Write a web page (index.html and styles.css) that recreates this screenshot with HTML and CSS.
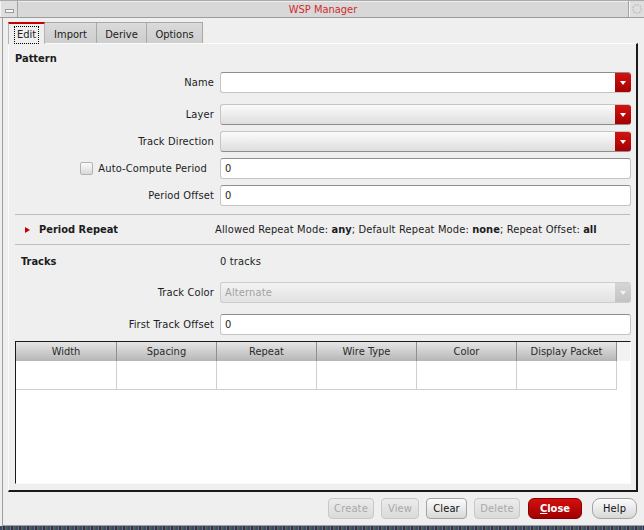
FILE: index.html
```html
<!DOCTYPE html>
<html>
<head>
<meta charset="utf-8">
<link rel="stylesheet" href="styles.css">
</head>
<body>
<div class="titlebar">
  <div class="tb-box tb-left"><span class="min-glyph"></span></div>
  <div class="tb-title">WSP Manager</div>
  <div class="tb-box tb-right">
    <svg width="12" height="12" viewBox="0 0 12 12"><circle cx="6" cy="6" r="4.2" fill="none" stroke="#b8b8b8" stroke-width="1.2" stroke-dasharray="1.6 1.2"/></svg>
  </div>
</div>
<div class="window">
  <div class="tabs">
    <div class="tab active"><span class="focus">Edit</span></div>
    <div class="tab">Import</div>
    <div class="tab">Derive</div>
    <div class="tab">Options</div>
  </div>
  <div class="panel">
    <div class="section-title">Pattern</div>

    <div class="row mt6">
      <div class="label">Name</div>
      <div class="field combo-edit"><span class="val"></span><span class="dd red"><i></i></span></div>
    </div>
    <div class="row mt11">
      <div class="label">Layer</div>
      <div class="field combo"><span class="val"></span><span class="dd red"><i></i></span></div>
    </div>
    <div class="row mt6">
      <div class="label">Track Direction</div>
      <div class="field combo"><span class="val"></span><span class="dd red"><i></i></span></div>
    </div>
    <div class="row mt6">
      <div class="label check-label"><span class="checkbox"></span><span>Auto-Compute Period</span></div>
      <div class="field text"><span class="val">0</span></div>
    </div>
    <div class="row mt6">
      <div class="label">Period Offset</div>
      <div class="field text"><span class="val">0</span></div>
    </div>

    <div class="sep sep-first"></div>
    <div class="repeat-row">
      <div class="repeat-left"><span class="tri"></span><b>Period Repeat</b></div>
      <div class="repeat-right">Allowed Repeat Mode: <b>any</b>; Default Repeat Mode: <b>none</b>; Repeat Offset: <b>all</b></div>
    </div>
    <div class="sep"></div>

    <div class="tracks-row">
      <div class="tracks-title">Tracks</div>
      <div class="tracks-count">0 tracks</div>
    </div>
    <div class="row mt13">
      <div class="label">Track Color</div>
      <div class="field combo disabled"><span class="val">Alternate</span><span class="dd gray"><i></i></span></div>
    </div>
    <div class="row mt11">
      <div class="label">First Track Offset</div>
      <div class="field text"><span class="val">0</span></div>
    </div>

    <div class="table">
      <div class="thead">
        <div class="th">Width</div>
        <div class="th">Spacing</div>
        <div class="th">Repeat</div>
        <div class="th">Wire Type</div>
        <div class="th">Color</div>
        <div class="th">Display Packet</div>
        <div class="th-fill"></div>
      </div>
      <div class="trow">
        <div class="td"></div>
        <div class="td"></div>
        <div class="td"></div>
        <div class="td"></div>
        <div class="td"></div>
        <div class="td"></div>
      </div>
    </div>
  </div>
  <div class="buttons">
    <div class="btn disabled w-create">Create</div>
    <div class="btn disabled w-view">View</div>
    <div class="btn w-clear">Clear</div>
    <div class="btn disabled w-delete">Delete</div>
    <div class="btn primary w-close"><u>C</u>lose</div>
    <div class="btn help w-help">Help</div>
  </div>
</div>
<div class="desktop"></div>
</body>
</html>
```
FILE: styles.css
```css
html, body {
  margin: 0;
  padding: 0;
}
body {
  width: 644px;
  height: 530px;
  overflow: hidden;
  background: #efefef;
  font-family: "DejaVu Sans Condensed", "DejaVu Sans", sans-serif;
  font-size: 11px;
  letter-spacing: 0.15px;
  color: #1c1c1c;
}
b, .section-title, .tracks-title, .btn.primary {
  letter-spacing: 0;
}

/* title bar */
.titlebar {
  display: flex;
  background: #d8d8d8;
  border-top: 1px solid #a9a9a9;
  border-bottom: 1px solid #9c9c9c;
  box-sizing: border-box;
  height: 18px;
}
.tb-box {
  width: 16px;
  display: flex;
  align-items: center;
  justify-content: center;
  background: #dedede;
  border-left: 1px solid #f4f4f4;
  border-right: 1px solid #a2a2a2;
}
.tb-right {
  border-left: 1px solid #a2a2a2;
  border-right: none;
  width: 15px;
  box-shadow: inset 1px 0 0 #f4f4f4;
}
.min-glyph {
  width: 7px;
  height: 2px;
  border: 1px solid #9a9a9a;
  background: #f8f8f8;
  margin-top: 4px;
}
.tb-title {
  flex: 1;
  text-align: center;
  color: #d42a2a;
  letter-spacing: 0;
  font-size: 11px;
  line-height: 15px;
  border-top: 1px solid #f0f0f0;
  box-sizing: border-box;
}

/* window */
.window {
  margin-left: 2px;
  border-left: 1px solid #9e9e9e;
  height: 508px;
  box-sizing: border-box;
  border-bottom: 1px solid #a0a0a0;
}

.tabs {
  display: flex;
  margin-left: 5px;
  padding-top: 4px;
  height: 21px;
}
.tab {
  height: 21px;
  box-sizing: border-box;
  padding-top: 2px;
  line-height: 19px;
  text-align: center;
  background: linear-gradient(#dadada, #cecece);
  border: 1px solid #a8a8a8;
  border-bottom: none;
  margin-left: -1px;
  color: #202020;
  letter-spacing: 0;
}
.tab:nth-child(2) { width: 53px; }
.tab:nth-child(3) { width: 51px; }
.tab:nth-child(4) { width: 57px; }
.tab.active {
  margin-left: 0;
  width: 37px;
  padding-top: 1px;
  background: #efefef;
  border-top: 2px solid #c40000;
  border-left: 1px solid #b4b4b4;
  border-right: 1px solid #b4b4b4;
  display: flex;
  align-items: center;
  justify-content: center;
  position: relative;
  z-index: 1;
  height: 22px;
}
.focus {
  border: 1px dotted #000;
  line-height: 14px;
  padding: 1px 2px;
}

.panel {
  margin-left: 5px;
  width: 630px;
  height: 449px;
  box-sizing: border-box;
  border-top: 1px solid #fbfbfb;
  border-left: 1px solid #fbfbfb;
  border-right: 2px solid #1a1a1a;
  border-bottom: 2px solid #1a1a1a;
  padding: 0 5px 0 6px;
}

.section-title {
  font-weight: bold;
  line-height: 14px;
  margin-top: 8px;
}

.row {
  display: grid;
  grid-template-columns: 199px 411px;
  column-gap: 6px;
  align-items: center;
  height: 21px;
}
.mt6 { margin-top: 6px; }
.mt11 { margin-top: 11px; }
.mt13 { margin-top: 13px; }

.label {
  text-align: right;
  white-space: nowrap;
}
.check-label {
  display: flex;
  justify-content: flex-end;
  align-items: center;
  gap: 5px;
  padding-right: 7px;
}
.checkbox {
  width: 13px;
  height: 13px;
  box-sizing: border-box;
  border: 1px solid #b2b2b2;
  border-radius: 2px;
  background: linear-gradient(#fafafa, #d9d9d9);
}

.field {
  height: 21px;
  box-sizing: border-box;
  border-radius: 3px;
  display: flex;
  align-items: center;
  overflow: hidden;
}
.field .val {
  flex: 1;
  padding-left: 4px;
}
.text, .combo-edit {
  background: #fff;
  border: 1px solid #c4c4c4;
  border-top-color: #8e8e8e;
}
.combo-edit {
  border-right: none;
}
.combo {
  background: linear-gradient(#fbfbfb, #dedede);
  border: 1px solid #c6c6c6;
  border-bottom-color: #8c8c8c;
  border-right: none;
}
.combo.disabled {
  background: linear-gradient(#f3f3f3, #e2e2e2);
  border-color: #cdcdcd;
  color: #a2a2a2;
}
.dd {
  width: 16px;
  align-self: stretch;
  margin: -1px 0;
  display: flex;
  align-items: center;
  justify-content: center;
  border-radius: 0 3px 3px 0;
}
.dd.red {
  background: linear-gradient(#d41414, #a20000);
}
.dd.gray {
  background: linear-gradient(#d6d6d6, #c2c2c2);
}
.dd i {
  width: 0;
  height: 0;
  border-left: 3.5px solid transparent;
  border-right: 3.5px solid transparent;
  border-top: 4px solid #fff;
  margin-top: 1px;
}
.dd.gray i { border-top-color: #f2f2f2; }

.sep {
  height: 1px;
  background: #bcbcbc;
  margin-right: 1px;
}
.sep-first { margin-top: 8px; }

.repeat-row {
  display: grid;
  grid-template-columns: 200px 1fr;
  align-items: center;
  height: 29px;
}
.repeat-left {
  display: flex;
  align-items: center;
  padding-left: 10px;
}
.tri {
  width: 0;
  height: 0;
  border-top: 3.5px solid transparent;
  border-bottom: 3.5px solid transparent;
  border-left: 5px solid #c20000;
  margin-right: 9px;
}
.repeat-right { white-space: nowrap; }

.tracks-row {
  display: grid;
  grid-template-columns: 205px 1fr;
  margin-top: 10px;
  line-height: 14px;
}
.tracks-title {
  font-weight: bold;
  padding-left: 6px;
}

.table {
  margin-top: 6px;
  height: 143px;
  width: 616px;
  box-sizing: border-box;
  border-top: 1px solid #1a1a1a;
  border-left: 1px solid #1a1a1a;
  border-bottom: 1px solid #fafafa;
  border-right: 1px solid #fafafa;
  background: #fff;
}
.thead {
  display: flex;
  height: 19px;
  background: #f0f0f0;
}
.th {
  width: 100px;
  box-sizing: border-box;
  text-align: center;
  line-height: 19px;
  background: linear-gradient(#e6e6e6, #b6b6b6);
  border-right: 1px solid #8f8f8f;
  color: #2a2a2a;
  letter-spacing: 0;
}
.th:first-child { width: 101px; }
.th-fill { flex: 1; background: #f2f2f2; }
.trow {
  display: flex;
  height: 29px;
}
.td {
  width: 100px;
  box-sizing: border-box;
  border-right: 1px solid #cfcfcf;
  border-bottom: 1px solid #cfcfcf;
}
.td:first-child { width: 101px; }

/* buttons */
.buttons {
  display: flex;
  justify-content: flex-end;
  padding-top: 6px;
  padding-right: 7px;
  gap: 7px;
}
.btn {
  height: 21px;
  box-sizing: border-box;
  border: 1px solid #a4a4a4;
  border-radius: 4px;
  background: linear-gradient(#fbfbfb, #d8d8d8);
  text-align: center;
  line-height: 19px;
  color: #111;
}
.btn.disabled {
  color: #a9a9a9;
  border-color: #c8c8c8;
  background: linear-gradient(#ececec, #dadada);
}
.btn.primary {
  background: linear-gradient(#d40f0f, #a10000);
  border-color: #8a0000;
  color: #fff;
  font-weight: bold;
  border-radius: 6px;
  margin-left: 1px;
}
.btn.help {
  border-radius: 8px;
  margin-left: 3px;
}
.w-create { width: 46px; }
.w-view { width: 38px; }
.w-clear { width: 41px; }
.w-delete { width: 46px; }
.w-close { width: 54px; }
.w-help { width: 45px; }

.desktop {
  height: 4px;
  background: repeating-linear-gradient(90deg, #3c4a6a 0 2px, #6a7088 2px 3px, #2e3548 3px 5px, #7a5a60 5px 6px, #405a58 6px 8px);
}
```
